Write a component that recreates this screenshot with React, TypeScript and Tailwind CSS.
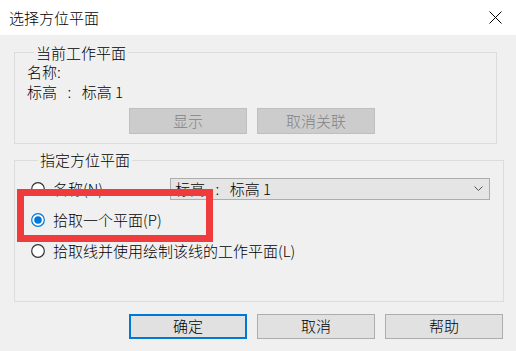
function Radio({ checked }: { checked?: boolean }) {
    return (
        <svg width="14" height="14" viewBox="0 0 14 14" className="shrink-0">
            {checked ? (
                <>
                    <circle cx="7" cy="7" r="6.3" fill="#ffffff" stroke="#0078d7" strokeWidth="1.2" />
                    <circle cx="7" cy="7" r="3.8" fill="#0078d7" />
                </>
            ) : (
                <circle cx="7" cy="7" r="6.3" fill="#ffffff" stroke="#333333" strokeWidth="1.2" />
            )}
        </svg>
    );
}

export default function App() {
    const level = "标高\u2002\u2009:\u2002\u2009标高 1";
    return (
        <div className="relative w-[516px] h-[351px] bg-[#f0f0f0] text-black text-[15px] font-light overflow-hidden" style={{ fontFamily: '"Noto Sans CJK SC", "Noto Sans", sans-serif' }}>
            <div className="h-[35px] bg-white flex items-center justify-between pl-[9px] pr-[14px]">
                <span className="leading-[20px]">选择方位平面</span>
                <svg width="13" height="13" viewBox="0 0 13 13">
                    <path d="M0.5 0.5 L12.5 12.5 M12.5 0.5 L0.5 12.5" stroke="#000" strokeWidth="1" />
                </svg>
            </div>

            <div className="pl-[14px]">
                <fieldset className="mt-[10px] w-[483px] h-[99px] border border-[#dcdcdc] pl-[12px]">
                    <legend className="ml-[7px] px-[2px] leading-[15px]">当前工作平面</legend>
                    <div className="leading-[15px] mt-[4px]">名称:</div>
                    <div className="leading-[15px] mt-[5px]">{level}</div>
                    <div className="flex gap-[10px] ml-[102px] mt-[9px]">
                        <div className="w-[118px] h-[26px] flex items-center justify-center bg-[#cccccc] border border-[#bfbfbf] text-[#838383]">显示</div>
                        <div className="w-[118px] h-[26px] flex items-center justify-center bg-[#cccccc] border border-[#bfbfbf] text-[#838383]">取消关联</div>
                    </div>
                </fieldset>

                <fieldset className="mt-[8px] w-[490px] h-[150px] border border-[#dcdcdc] pl-[16px]">
                    <legend className="ml-[7px] px-[2px] leading-[16px]">指定方位平面</legend>
                    <div className="flex items-center h-[22px] mt-[10px]">
                        <div className="w-[139px] flex items-center gap-[8px]">
                            <Radio />
                            <span>名称(N)</span>
                        </div>
                        <div className="w-[320px] h-[22px] flex items-center justify-between bg-[#e5e5e5] border border-[#adadad] pl-[4px] pr-[6px]">
                            <span>{level}</span>
                            <svg width="9" height="6" viewBox="0 0 9 6">
                                <path d="M0.5 0.5 L4.5 4.5 L8.5 0.5" fill="none" stroke="#555" strokeWidth="1" />
                            </svg>
                        </div>
                    </div>
                    <div className="flex items-center gap-[8px] h-[22px] mt-[9px]">
                        <Radio checked />
                        <span>拾取一个平面(P)</span>
                    </div>
                    <div className="flex items-center gap-[8px] h-[22px] mt-[9px]">
                        <Radio />
                        <span>拾取线并使用绘制该线的工作平面(L)</span>
                    </div>
                </fieldset>

                <div className="flex gap-[10px] ml-[115px] mt-[12px]">
                    <div className="w-[118px] h-[25px] flex items-center justify-center bg-[#e1e1e1] border-2 border-[#0078d7]">确定</div>
                    <div className="w-[118px] h-[25px] flex items-center justify-center bg-[#e1e1e1] border border-[#adadad]">取消</div>
                    <div className="w-[118px] h-[25px] flex items-center justify-center bg-[#e1e1e1] border border-[#adadad]">帮助</div>
                </div>
            </div>

            <div className="absolute left-[17px] top-[189px] w-[196px] h-[53px] border-[7px] border-[#ef3b3b]" />
        </div>
    );
}
